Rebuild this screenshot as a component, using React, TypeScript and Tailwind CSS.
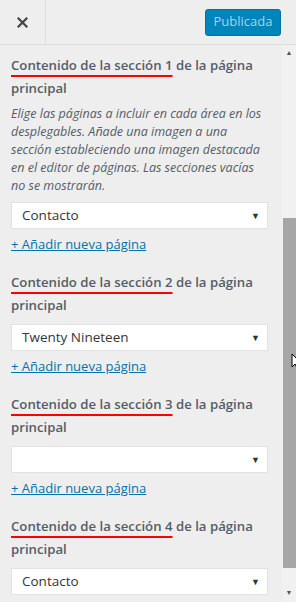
type Section = {
  num: number;
  value: string;
  description?: string;
};

const sections: Section[] = [
  {
    num: 1,
    value: "Contacto",
    description:
      "Elige las páginas a incluir en cada área en los desplegables. Añade una imagen a una sección estableciendo una imagen destacada en el editor de páginas. Las secciones vacías no se mostrarán.",
  },
  { num: 2, value: "Twenty Nineteen" },
  { num: 3, value: "" },
  { num: 4, value: "Contacto" },
];

const font = { fontFamily: '"Open Sans", "Noto Sans", sans-serif' };

function FakeSelect({ value }: { value: string }) {
  return (
    <div className="h-[27px] bg-white border border-[#e2e2e2] flex items-center justify-between pl-[10px] pr-[7px] text-[13.5px] text-[#32373c]">
      <span>{value}</span>
      <span className="text-[9px] text-[#333]">▼</span>
    </div>
  );
}

function SectionBlock({ section, last }: { section: Section; last: boolean }) {
  return (
    <div className="mb-[18px]">
      <div className="text-[13.2px] leading-[23px] font-semibold text-[#555d66]">
        <span className="underline decoration-[#ff0000] decoration-2 underline-offset-[5px]">
          Contenido de la sección {section.num}
        </span>{" "}
        de la página principal
      </div>
      {section.description && (
        <p className="mt-[5px] text-[12.5px] leading-[18px] italic text-[#555d66]">
          {section.description}
        </p>
      )}
      <div className="mt-[7px]">
        <FakeSelect value={section.value} />
      </div>
      {!last && (
        <a className="block mt-[6px] text-[13px] leading-[18px] text-[#0073aa] underline">
          + Añadir nueva página
        </a>
      )}
    </div>
  );
}

export default function App() {
  return (
    <div className="w-[296px] h-[602px] bg-[#eeeeee] flex flex-col overflow-hidden" style={font}>
      {/* header */}
      <div className="h-[45px] shrink-0 border-b border-[#dddddd] flex items-center">
        <div className="w-[46px] h-full border-r border-[#dddddd] flex items-center justify-center">
          <svg width="11" height="11" viewBox="0 0 11 11">
            <path d="M1.5 1.5 L9.5 9.5 M9.5 1.5 L1.5 9.5" stroke="#444" strokeWidth="2.2" strokeLinecap="square" />
          </svg>
        </div>
        <div className="flex-1 flex justify-end pr-[15px]">
          <button className="h-[27px] w-[76px] rounded-[3px] bg-[#0085ba] border border-[#0073aa] text-[13px] text-[#a3d5ea]">
            Publicada
          </button>
        </div>
      </div>

      {/* body */}
      <div className="flex-1 flex min-h-0">
        <div className="flex-1 overflow-hidden pl-[11px] pr-[14px] pt-[9px]">
          {sections.map((s, i) => (
            <SectionBlock key={s.num} section={s} last={i === sections.length - 1} />
          ))}
        </div>

        {/* scrollbar */}
        <div className="w-[14px] bg-[#f1f1f1] flex flex-col items-center">
          <div className="h-[17px] flex items-center justify-center text-[7px] text-[#555]">▲</div>
          <div className="h-[156px]" />
          <div className="relative w-[13px] h-[350px] bg-[#a6a6a6]">
            <svg className="absolute left-[8px] top-[135px]" width="10" height="16" viewBox="0 0 10 16">
              <path d="M1 1 L1 14 L4 11 L6 15 L8 14 L6 10 L10 10 Z" fill="#fff" stroke="#000" strokeWidth="1" />
            </svg>
          </div>
          <div className="flex-1" />
          <div className="h-[17px] flex items-center justify-center text-[7px] text-[#555]">▼</div>
        </div>
      </div>
    </div>
  );
}
